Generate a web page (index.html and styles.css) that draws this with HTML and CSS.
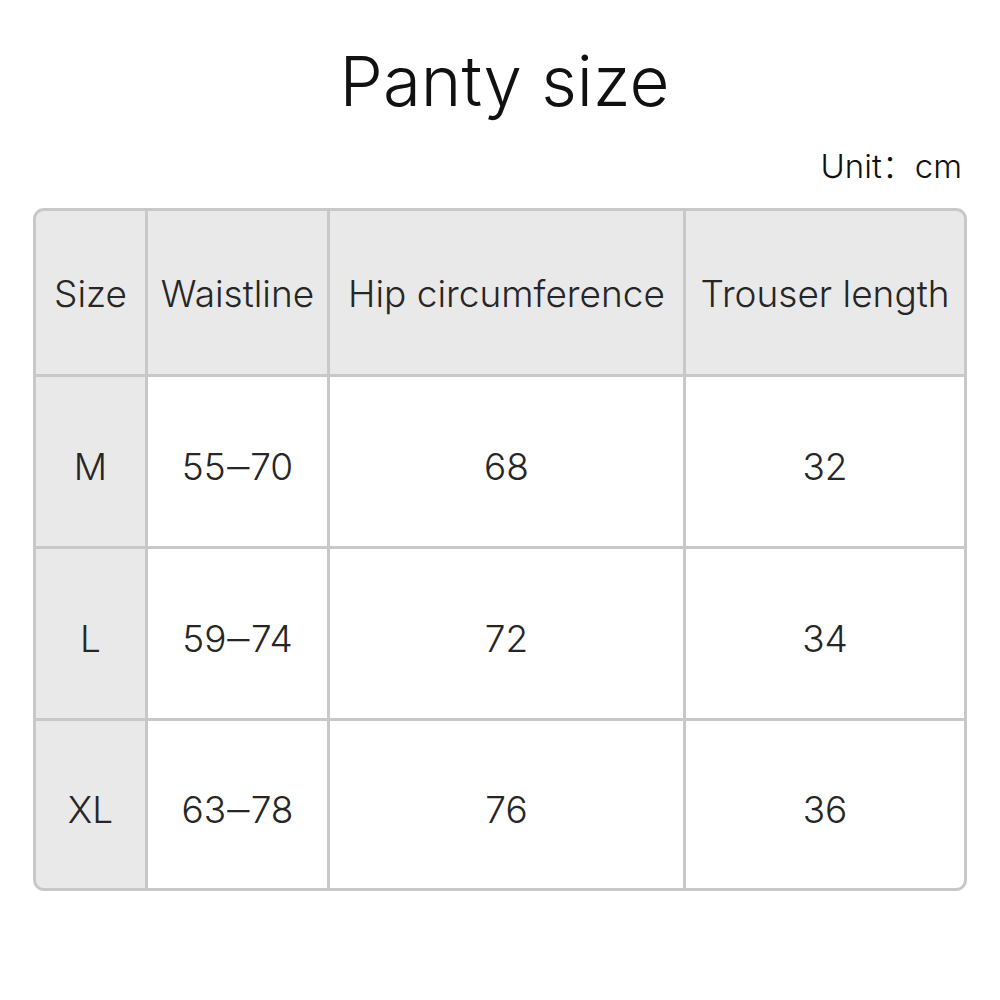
FILE: index.html
```html
<!DOCTYPE html>
<html>
<head>
<meta charset="utf-8">
<link rel="stylesheet" href="styles.css">
</head>
<body>
<div class="page">
  <h1 class="title">Panty size</h1>
  <div class="unit">Unit：cm</div>
  <div class="table">
    <div class="cell head">Size</div>
    <div class="cell head">Waistline</div>
    <div class="cell head">Hip circumference</div>
    <div class="cell head">Trouser length</div>
    <div class="cell side">M</div>
    <div class="cell">55<span class="dash">–</span>70</div>
    <div class="cell">68</div>
    <div class="cell">32</div>
    <div class="cell side">L</div>
    <div class="cell">59<span class="dash">–</span>74</div>
    <div class="cell">72</div>
    <div class="cell">34</div>
    <div class="cell side">XL</div>
    <div class="cell">63<span class="dash">–</span>78</div>
    <div class="cell">76</div>
    <div class="cell">36</div>
  </div>
</div>
</body>
</html>
```
FILE: styles.css
```css
html, body {
  margin: 0;
  padding: 0;
  background: #ffffff;
}
.page {
  width: 1000px;
  height: 1000px;
  font-family: Inter, "Noto Sans", "Noto Sans CJK SC", sans-serif;
  font-weight: 300;
  color: #222;
}
.title {
  margin: 0;
  padding-top: 36px;
  height: 90px;
  text-align: center;
  font-size: 69px;
  font-weight: 300;
  line-height: 90px;
  color: #111;
  padding-left: 9px;
}
.unit {
  text-align: right;
  padding-right: 38px;
  margin-top: 20px;
  font-size: 33px;
  line-height: 40px;
  height: 62px;
  color: #111;
}
.table {
  margin-left: 33px;
  width: 928px;
  border: 3px solid #c8c8c8;
  border-radius: 11px;
  overflow: hidden;
  display: grid;
  grid-template-columns: 109px 179px 353px 278px;
  grid-template-rows: 163px 169px 169px 167px;
  gap: 3px;
  background: #c8c8c8;
}
.cell {
  background: #ffffff;
  display: flex;
  align-items: center;
  justify-content: center;
  font-size: 37px;
  color: #262626;
  white-space: nowrap;
  padding-top: 10px;
}
.dash {
  padding: 0 3px;
  transform: scaleX(1.2);
  display: inline-block;
}
.head {
  padding-top: 2px;
}
.head, .side {
  background: #e9e9e9;
}
```
